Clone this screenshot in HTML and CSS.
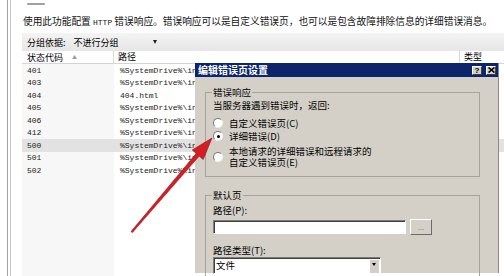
FILE: index.html
```html
<!DOCTYPE html>
<html>
<head>
    <meta charset="UTF-8">
    <title>错误页</title>
    <link rel="stylesheet" href="styles.css">
</head>
<body>
    <div class="frame">
        <div class="inner">
            <div class="dash"></div>
            <p class="desc">使用此功能配置 <span class="mono">HTTP</span> 错误响应。错误响应可以是自定义错误页，也可以是包含故障排除信息的详细错误消息。</p>
            <div class="list">
                <div class="group-bar">
                    <span>分组依据:</span>
                    <span class="group-value">不进行分组</span>
                    <span class="group-arrow"></span>
                </div>
                <div class="list-head">
                    <div class="col-code">状态代码<span class="sort">▲</span></div>
                    <div class="col-path">路径</div>
                    <div class="col-type">类型</div>
                </div>
                <div class="rows">
                    <div class="row"><span class="col-code">401</span><span class="col-path">%SystemDrive%\in</span></div>
                    <div class="row"><span class="col-code">403</span><span class="col-path">%SystemDrive%\in</span></div>
                    <div class="row"><span class="col-code">404</span><span class="col-path">404.html</span></div>
                    <div class="row"><span class="col-code">405</span><span class="col-path">%SystemDrive%\in</span></div>
                    <div class="row"><span class="col-code">406</span><span class="col-path">%SystemDrive%\in</span></div>
                    <div class="row"><span class="col-code">412</span><span class="col-path">%SystemDrive%\in</span></div>
                    <div class="row selected"><span class="col-code">500</span><span class="col-path">%SystemDrive%\in</span></div>
                    <div class="row"><span class="col-code">501</span><span class="col-path">%SystemDrive%\in</span></div>
                    <div class="row"><span class="col-code">502</span><span class="col-path">%SystemDrive%\in</span></div>
                </div>
            </div>
        </div>
    </div>

    <!-- 编辑错误页设置 对话框 -->
    <div class="dialog">
        <div class="title-bar">
            <span class="title">编辑错误页设置</span>
            <span class="tb-btn help">?</span>
            <span class="tb-btn">
                <svg width="7" height="6" viewBox="0 0 7 6"><path d="M0.5 0.5 L6.5 5.5 M6.5 0.5 L0.5 5.5" stroke="#000" stroke-width="1.6"/></svg>
            </span>
        </div>
        <div class="dialog-body">
            <fieldset class="groupbox first">
                <legend>错误响应</legend>
                <p class="prompt">当服务器遇到错误时，返回:</p>
                <label class="option opt-1"><span class="radio"></span>自定义错误页(C)</label>
                <label class="option opt-2"><span class="radio checked"></span>详细错误(D)</label>
                <label class="option opt-3"><span class="radio"></span><span class="two-line">本地请求的详细错误和远程请求的<br>自定义错误页(E)</span></label>
            </fieldset>
            <fieldset class="groupbox second">
                <legend>默认页</legend>
                <p class="prompt">路径(P):</p>
                <div class="path-row">
                    <span class="textbox"></span>
                    <span class="browse">...</span>
                </div>
                <p class="prompt type-label">路径类型(T):</p>
                <div class="combo">
                    <span class="combo-text">文件</span>
                    <span class="combo-btn"></span>
                </div>
            </fieldset>
        </div>
    </div>

    <svg class="arrow" width="504" height="276" viewBox="0 0 504 276">
        <polygon points="131,231.6 196.2,153.5 192.2,150 212,138 203.2,159.6 199.2,156.1 132.4,232.6" fill="#d21e24" stroke="#8e1216" stroke-width="0.6" stroke-linejoin="round"/>
    </svg>
</body>
</html>
```

FILE: styles.css
```css
body {
    margin: 0;
    height: 276px;
    overflow: hidden;
    background: #fff;
    color: #000;
    font-family: "Noto Sans CJK SC", sans-serif;
}
p {
    margin: 0;
}
.frame {
    height: 276px;
    box-sizing: border-box;
    margin-left: 7px;
    padding-left: 2px;
    border-left: 1px solid #a3a3a3;
}
.inner {
    height: 100%;
    display: flex;
    flex-direction: column;
    border-left: 1px solid #c4c4c4;
}
.dash {
    width: 18px;
    height: 2px;
    margin: 3px 0 0 16px;
    background: #a0a0a0;
    border-radius: 1px;
}
.desc {
    margin: 10px 0 0 12px;
    font-size: 9.7px;
    line-height: 12px;
    white-space: nowrap;
    color: #111;
}
.mono {
    font-family: "Liberation Mono", monospace;
    font-size: 8px;
}

/* 列表 */
.list {
    flex: 1;
    display: flex;
    flex-direction: column;
    margin: 4px 0 0 11px;
}
.group-bar {
    height: 18px;
    display: flex;
    align-items: center;
    padding-left: 5px;
    font-size: 9px;
    background: linear-gradient(#f4f4f4, #e6e6e6);
}
.group-value {
    margin-left: 8px;
}
.group-arrow {
    margin-left: 34px;
    width: 0;
    height: 0;
    border-left: 2px solid transparent;
    border-right: 2px solid transparent;
    border-top: 4px solid #222;
}
.list-head {
    height: 12px;
    display: flex;
    font-size: 9px;
    line-height: 12px;
    border-bottom: 1px solid #d4d4d4;
}
.col-code {
    width: 92px;
    flex: none;
    padding-left: 5px;
    box-sizing: border-box;
}
.col-path {
    width: 346px;
    flex: none;
    padding-left: 6px;
    box-sizing: border-box;
    white-space: nowrap;
    overflow: hidden;
}
.list-head .col-code,
.list-head .col-path {
    border-right: 1px solid #d8d8d8;
}
.list-head .col-path {
    padding-left: 4px;
}
.col-type {
    padding-left: 4px;
}
.sort {
    margin-left: 9px;
    font-size: 5px;
    color: #9a9a9a;
    vertical-align: 2px;
}
.rows {
    flex: 1;
    background: linear-gradient(to right, #f7f7f7 92px, #fff 92px);
}
.row {
    height: 12.5px;
    display: flex;
    align-items: center;
    font-family: "Liberation Mono", monospace;
    font-size: 8px;
    color: #222;
}
.row.selected {
    background: #e2e2e2;
}

/* 对话框 */
.dialog {
    position: absolute;
    left: 195px;
    top: 63px;
    width: 304px;
    height: 210px;
    box-sizing: border-box;
    background: #d4d0c8;
    border-right: 1px solid #8a8a8a;
    font-size: 9.5px;
}
.title-bar {
    height: 14px;
    display: flex;
    align-items: center;
    padding: 0 2px 0 3px;
    background: #0c246a;
}
.title {
    flex: 1;
    color: #fff;
    font-weight: bold;
    font-size: 10px;
    line-height: 14px;
}
.tb-btn {
    width: 10px;
    height: 9px;
    box-sizing: border-box;
    display: flex;
    align-items: center;
    justify-content: center;
    margin-left: 4px;
    background: #d4d0c8;
    border: 1px solid;
    border-color: #fff #404040 #404040 #fff;
}
.help {
    font-family: "Liberation Sans", sans-serif;
    font-weight: bold;
    font-size: 8px;
    line-height: 7px;
}
.dialog-body {
    padding: 9px 18px 0 10px;
}
.groupbox {
    margin: 0;
    min-width: 0;
    padding: 1px 6px 8px 7px;
    border: 1px solid #a6a39b;
}
.groupbox legend {
    padding: 0 1px;
    margin-left: -1px;
    line-height: 12px;
}
.groupbox.second {
    margin-top: 12px;
    padding-top: 3px;
}
.prompt {
    line-height: 12px;
}
.option {
    display: flex;
    align-items: center;
    gap: 6px;
    line-height: 12px;
}
.opt-1 {
    margin-top: 6px;
}
.opt-2 {
    margin-top: 1px;
}
.opt-3 {
    margin-top: 4px;
}
.two-line {
    line-height: 11px;
}
.radio {
    position: relative;
    width: 8px;
    height: 8px;
    flex: none;
    border-radius: 50%;
    border: 1px solid;
    border-color: #7a7a7a #f4f4f4 #f4f4f4 #7a7a7a;
    background: #fff;
}
.radio.checked::after {
    content: "";
    position: absolute;
    left: 2.5px;
    top: 2.5px;
    width: 3px;
    height: 3px;
    border-radius: 50%;
    background: #000;
}
.path-row {
    display: flex;
    align-items: center;
    margin-top: 3px;
    height: 16px;
}
.textbox {
    width: 193px;
    height: 14px;
    box-sizing: border-box;
    background: #fff;
    border: 1px solid;
    border-color: #7c7c7c #fff #fff #7c7c7c;
    box-shadow: inset 1px 1px 0 #404040;
}
.browse {
    width: 22px;
    height: 16px;
    box-sizing: border-box;
    margin-left: 4px;
    display: flex;
    align-items: center;
    justify-content: center;
    font-family: "Liberation Sans", sans-serif;
    font-size: 7px;
    color: #555;
    border: 1px solid;
    border-color: #fff #6a6a6a #6a6a6a #fff;
}
.type-label {
    margin-top: 9px;
}
.combo {
    width: 168px;
    height: 17px;
    margin-top: 1px;
    box-sizing: border-box;
    display: flex;
    background: #fff;
    border: 1px solid;
    border-color: #7c7c7c #fff #fff #7c7c7c;
    box-shadow: inset 1px 1px 0 #404040;
}
.combo-text {
    flex: 1;
    padding-left: 2px;
    line-height: 14px;
}
.combo-btn {
    width: 9px;
    margin: 1px 1px 0 0;
    background: #d4d0c8;
    border-top: 1px solid #fff;
    position: relative;
}
.combo-btn::after {
    content: "";
    position: absolute;
    left: 2px;
    top: 3px;
    border-left: 2.5px solid transparent;
    border-right: 2.5px solid transparent;
    border-top: 3px solid #000;
}
.arrow {
    position: absolute;
    left: 0;
    top: 0;
    pointer-events: none;
}
```
